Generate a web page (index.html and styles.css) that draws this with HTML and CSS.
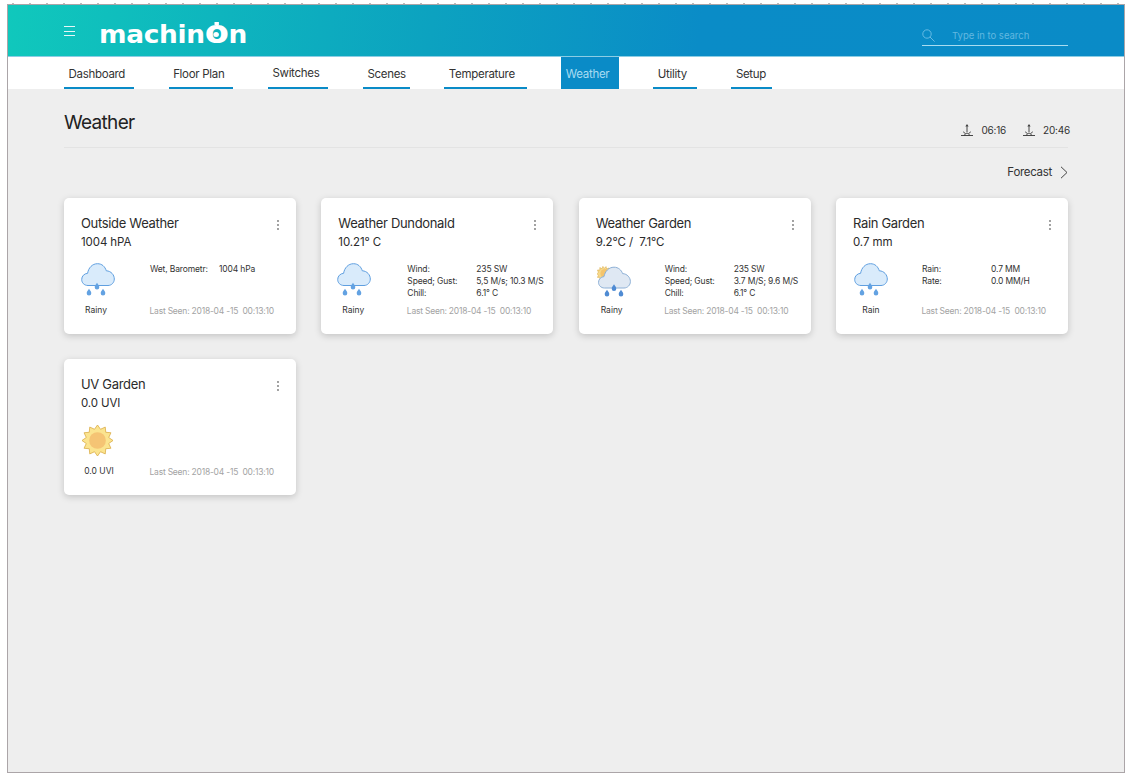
FILE: index.html
```html
<html>
<head>
<meta charset="utf-8">
<title>Machinon - Weather</title>
<link rel="stylesheet" href="styles.css">
</head>
<body>
<svg class="defs" width="0" height="0">
	<symbol id="cloud" viewBox="0 0 34 34">
		<path d="M7 22.5C3 22.5 .7 19.6 .7 16.5C.7 13 3.3 10.6 6.6 10.3C7.5 4.8 11.3 .7 16.5 .7C21 .7 24 3.6 25.3 7.8C30.2 8 33.3 12 33.3 16C33.3 19.6 30.5 22.5 27 22.5Z" fill="#d9ebfb" stroke="#5f9fe0" stroke-width="1"/>
		<path d="M16 19.8c-1.1 1.7-2.3 2.9-2.3 4.5a2.3 2.3 0 0 0 4.6 0c0-1.6-1.2-2.8-2.3-4.5zM8 25.8c-1.1 1.7-2.3 2.9-2.3 4.5a2.3 2.3 0 0 0 4.6 0c0-1.6-1.2-2.8-2.3-4.5zM22 25.8c-1.1 1.7-2.3 2.9-2.3 4.5a2.3 2.3 0 0 0 4.6 0c0-1.6-1.2-2.8-2.3-4.5z" fill="#63a2e2"/>
	</symbol>
	<symbol id="cloud-sun" viewBox="0 0 34 34">
		<polygon points="14,7 11.7,7.4 11.9,5 9.6,6 9,3.6 7.4,5.4 5.9,3.4 5,5.7 2.8,4.6 2.9,7.1 .5,7 1.4,9.2 0,10.8 1.4,12.2 .5,14.4 2.9,14.3 2.8,16.6 7,16 14,10" fill="#f7d98a" stroke="#dcae4e" stroke-width=".6"/>
		<circle cx="8" cy="10.5" r="4.6" fill="#f4c46c"/>
		<path d="M7.5 25C4 25 1.5 22.3 1.5 19.4C1.5 16.2 4 13.8 7 13.6C8 8.6 11.5 4.2 17 4.2C21.3 4.2 24.4 7 25.6 10.6C30.2 10.8 33.4 14.6 33.4 18.6C33.4 22 30.6 25 27 25Z" fill="#dfe8f3" stroke="#8db0d6" stroke-width="1"/>
		<path d="M17 21.3c-1.1 1.7-2.3 2.9-2.3 4.5a2.3 2.3 0 0 0 4.6 0c0-1.6-1.2-2.8-2.3-4.5zM10 26.8c-1.1 1.7-2.3 2.9-2.3 4.5a2.3 2.3 0 0 0 4.6 0c0-1.6-1.2-2.8-2.3-4.5zM24 26.8c-1.1 1.7-2.3 2.9-2.3 4.5a2.3 2.3 0 0 0 4.6 0c0-1.6-1.2-2.8-2.3-4.5z" fill="#4f8bd3"/>
	</symbol>
	<symbol id="sun" viewBox="0 0 32 32">
		<polygon points="32,16 27.6,12.9 29.86,8 24.5,7.5 24,2.14 19.1,4.4 16,0 12.9,4.4 8,2.14 7.5,7.5 2.14,8 4.4,12.9 0,16 4.4,19.1 2.14,24 7.5,24.5 8,29.86 12.9,27.6 16,32 19.1,27.6 24,29.86 24.5,24.5 29.86,24 27.6,19.1" fill="#fbe48f" stroke="#d9ab45" stroke-width=".8"/>
		<circle cx="16" cy="16" r="8.6" fill="#f5c474"/>
	</symbol>
	<symbol id="dots" viewBox="0 0 4 10">
		<circle cx="2" cy="1" r=".9" fill="#777"/>
		<circle cx="2" cy="5" r=".9" fill="#777"/>
		<circle cx="2" cy="9" r=".9" fill="#777"/>
	</symbol>
	<symbol id="sunmark" viewBox="0 0 12 13">
		<path d="M0 12.5H12M6 3.4V9M2.2 8.8L4.4 10.6M9.8 8.8L7.6 10.6M3.6 12.3C3.8 11 4.8 10.2 6 10.2C7.2 10.2 8.2 11 8.4 12.3" fill="none" stroke="#333" stroke-width=".9"/>
		<path d="M6 1L7.6 3.6H4.4Z" fill="#333"/>
	</symbol>
</svg>
<div class="ticks"></div>
<div class="frame">
	<header class="topbar">
		<div class="brand">
			<div class="burger"><span></span><span></span><span></span></div>
			<div class="logo">machin<span class="logo-o">o</span>n</div>
		</div>
		<div class="search">
			<svg class="search-icon" viewBox="0 0 13 13" width="13" height="13"><circle cx="5" cy="5" r="4.2" fill="none" stroke="#6fc0e6" stroke-width=".9"/><path d="M8 8L12.6 12.6" stroke="#6fc0e6" stroke-width=".9"/></svg>
			<span class="search-text">Type in to search</span>
		</div>
	</header>
	<nav class="tabs">
		<a class="tab">Dashboard</a>
		<a class="tab">Floor Plan</a>
		<a class="tab tab-high">Switches</a>
		<a class="tab tab-scenes">Scenes</a>
		<a class="tab tab-temp">Temperature</a>
		<a class="tab active">Weather</a>
		<a class="tab tab-utility">Utility</a>
		<a class="tab tab-setup">Setup</a>
	</nav>
	<main class="content">
		<div class="page-head">
			<h1>Weather</h1>
			<div class="sun-times">
				<svg class="sunmark"><use href="#sunmark"/></svg><span>06:16</span>
				<svg class="sunmark second"><use href="#sunmark"/></svg><span>20:46</span>
			</div>
		</div>
		<div class="forecast">
			<span>Forecast</span>
			<svg viewBox="0 0 8 13" width="8" height="13"><path d="M1 .8L7 6.5L1 12.2" fill="none" stroke="#444" stroke-width="1"/></svg>
		</div>
		<div class="cards">
			<section class="card">
				<svg class="card-menu"><use href="#dots"/></svg>
				<h2>Outside Weather</h2>
				<div class="value">1004 hPA</div>
				<div class="card-body">
					<svg class="weather-icon"><use href="#cloud"/></svg>
					<dl class="details">
						<dt>Wet, Barometr:</dt><dd>1004 hPa</dd>
					</dl>
				</div>
				<div class="card-foot">
					<span class="state">Rainy</span>
					<span class="seen">Last Seen: 2018-04 -15&nbsp;&nbsp;00:13:10</span>
				</div>
			</section>
			<section class="card">
				<svg class="card-menu"><use href="#dots"/></svg>
				<h2>Weather Dundonald</h2>
				<div class="value">10.21° C</div>
				<div class="card-body">
					<svg class="weather-icon icon-left"><use href="#cloud"/></svg>
					<dl class="details">
						<dt>Wind:</dt><dd>235 SW</dd>
						<dt>Speed; Gust:</dt><dd>5,5 M/s; 10.3 M/S</dd>
						<dt>Chill:</dt><dd>6.1° C</dd>
					</dl>
				</div>
				<div class="card-foot">
					<span class="state">Rainy</span>
					<span class="seen">Last Seen: 2018-04 -15&nbsp;&nbsp;00:13:10</span>
				</div>
			</section>
			<section class="card">
				<svg class="card-menu"><use href="#dots"/></svg>
				<h2>Weather Garden</h2>
				<div class="value">9.2°C /&nbsp;&nbsp;7.1°C</div>
				<div class="card-body">
					<svg class="weather-icon icon-right"><use href="#cloud-sun"/></svg>
					<dl class="details">
						<dt>Wind:</dt><dd>235 SW</dd>
						<dt>Speed; Gust:</dt><dd>3.7 M/S; 9.6 M/S</dd>
						<dt>Chill:</dt><dd>6.1° C</dd>
					</dl>
				</div>
				<div class="card-foot">
					<span class="state state-mid">Rainy</span>
					<span class="seen">Last Seen: 2018-04 -15&nbsp;&nbsp;00:13:10</span>
				</div>
			</section>
			<section class="card">
				<svg class="card-menu"><use href="#dots"/></svg>
				<h2>Rain Garden</h2>
				<div class="value">0.7 mm</div>
				<div class="card-body">
					<svg class="weather-icon icon-right"><use href="#cloud"/></svg>
					<dl class="details">
						<dt>Rain:</dt><dd>0.7 MM</dd>
						<dt>Rate:</dt><dd>0.0 MM/H</dd>
					</dl>
				</div>
				<div class="card-foot">
					<span class="state state-wide">Rain</span>
					<span class="seen">Last Seen: 2018-04 -15&nbsp;&nbsp;00:13:10</span>
				</div>
			</section>
			<section class="card">
				<svg class="card-menu"><use href="#dots"/></svg>
				<h2>UV Garden</h2>
				<div class="value">0.0 UVI</div>
				<div class="card-body">
					<svg class="weather-icon sun-icon"><use href="#sun"/></svg>
				</div>
				<div class="card-foot">
					<span class="state state-wide">0.0 UVI</span>
					<span class="seen">Last Seen: 2018-04 -15&nbsp;&nbsp;00:13:10</span>
				</div>
			</section>
		</div>
	</main>
</div>
</body>
</html>
```

FILE: styles.css
```css
html, body {
	margin: 0;
	padding: 0;
	background-color: #fff;
}

body {
	font-family: Inter, "Liberation Sans", sans-serif;
	color: #333;
	width: 1134px;
	height: 779px;
	overflow: hidden;
}

.defs {
	display: block;
	height: 0;
}

.ticks {
	height: 1px;
	margin: 3px 14px 0 12px;
	background: repeating-linear-gradient(90deg, #bbb 0, #bbb 2px, transparent 2px, transparent 17px);
}

.frame {
	margin-left: 7px;
	width: 1116px;
	height: 767px;
	border: 1px solid #aba5a8;
	display: flex;
	flex-direction: column;
	background-color: #eee;
}

/* header */
.topbar {
	height: 52px;
	flex: none;
	box-sizing: border-box;
	border-bottom: 1px solid #8ccde4;
	background: linear-gradient(97deg, #10c8bc 0%, #0ca2c0 38%, #0a8cc7 62%, #0a8bc7 100%);
	display: flex;
	justify-content: space-between;
	padding: 0 56px;
}

.brand {
	display: flex;
	align-items: flex-start;
}

.burger {
	width: 11px;
	margin-top: 21px;
	display: flex;
	flex-direction: column;
	gap: 3.6px;
}

.burger span {
	height: 1px;
	background-color: #e6f7f7;
}

.logo {
	margin: 10px 0 0 24px;
	height: 34px;
	font-family: "DejaVu Sans", sans-serif;
	font-weight: bold;
	font-size: 24px;
	line-height: 34px;
	letter-spacing: -.3px;
	color: #fff;
	white-space: nowrap;
	transform: scaleX(1.1);
	transform-origin: left center;
}

.logo-o {
	position: relative;
	display: inline-block;
	height: 34px;
	font-size: 32px;
}

.logo-o::before {
	content: "";
	position: absolute;
	left: 50%;
	top: 7px;
	width: 4px;
	height: 3px;
	margin-left: -2px;
	background-color: #fff;
}

.logo-o::after {
	content: "";
	position: absolute;
	left: 50%;
	top: 17px;
	width: 5px;
	height: 5px;
	margin-left: -2.5px;
	border-radius: 50%;
	background-color: #fff;
}

.search {
	width: 146px;
	height: 41px;
	box-sizing: border-box;
	border-bottom: 1px solid #a9dcf0;
	display: flex;
	align-items: flex-end;
	padding-bottom: 3px;
}

.search-icon {
	flex: none;
}

.search-text {
	margin-left: 17px;
	font-size: 9.5px;
	line-height: 13px;
	color: #62b8e0;
}

/* nav */
.tabs {
	height: 32px;
	flex: none;
	background-color: #fff;
	display: flex;
	gap: 34.5px;
	padding: 0 56px;
}

.tab {
	padding: 0 9px 0 4.5px;
	font-size: 11.5px;
	letter-spacing: -.3px;
	line-height: 34px;
	color: #333;
	border-bottom: 2px solid #0a8bc7;
	height: 30px;
}

.tab-high {
	line-height: 32px;
}

.tab-scenes {
	padding-right: 4px;
}

.tab-temp {
	padding-right: 12px;
}

.tab-utility {
	padding-right: 10px;
}

.tab-setup {
	padding-right: 6px;
}

.tab.active {
	background-color: #0a8bc7;
	color: #a8dcf2;
	padding-right: 9.5px;
}

/* content */
.content {
	flex: 1;
	padding: 0 56px;
}

.page-head {
	height: 59px;
	box-sizing: border-box;
	border-bottom: 1px solid #e3e3e3;
	display: flex;
	justify-content: space-between;
}

h1 {
	margin: 21px 0 0;
	font-size: 19px;
	letter-spacing: -.7px;
	line-height: 26px;
	font-weight: 400;
	color: #222;
}

.sun-times {
	margin: 33px -2px 0 0;
	display: flex;
	align-items: flex-start;
	font-size: 10px;
	letter-spacing: -.2px;
	line-height: 16px;
	color: #333;
}

.sunmark {
	width: 12px;
	height: 13px;
	margin-right: 8px;
	margin-top: 1px;
}

.sunmark.second {
	margin-left: 17px;
}

.forecast {
	margin-top: 16px;
	height: 16px;
	display: flex;
	justify-content: flex-end;
	align-items: center;
	gap: 8px;
	font-size: 11.5px;
	letter-spacing: -.3px;
	color: #333;
}

.cards {
	margin-top: 18px;
	display: grid;
	grid-template-columns: repeat(4, 232px);
	column-gap: 25.33px;
	row-gap: 25px;
}

.card {
	position: relative;
	height: 136px;
	box-sizing: border-box;
	padding: 16px 10px 0 17px;
	background-color: #fff;
	border-radius: 5px;
	box-shadow: 0 2px 7px rgba(0, 0, 0, .18);
}

.card-menu {
	position: absolute;
	right: 16px;
	top: 22px;
	width: 4px;
	height: 10px;
}

h2 {
	margin: 0;
	font-size: 13px;
	letter-spacing: -.33px;
	line-height: 18px;
	font-weight: 400;
	color: #2b2b2b;
}

.value {
	margin-top: 2px;
	font-size: 11.5px;
	letter-spacing: -.1px;
	line-height: 16px;
	color: #2b2b2b;
}

.card-body {
	margin-top: 13px;
	height: 40px;
	display: grid;
	grid-template-columns: 69px auto;
	align-items: start;
}

.weather-icon {
	width: 34px;
	height: 34px;
}

.icon-left {
	margin-left: -1px;
}

.icon-right {
	margin-left: 1px;
}

.sun-icon {
	width: 31px;
	height: 31px;
	margin: 1px 0 0 1px;
}

.details {
	margin: 0;
	display: grid;
	grid-template-columns: 69px auto;
	font-size: 8.5px;
	letter-spacing: -.15px;
	line-height: 12px;
	color: #333;
}

dt, dd {
	margin: 0;
	white-space: nowrap;
}

.card-foot {
	display: grid;
	grid-template-columns: 68.5px auto;
	margin-top: 1px;
	font-size: 8.5px;
	line-height: 12px;
}

.state {
	width: 30px;
	text-align: center;
	white-space: nowrap;
	color: #333;
}

.state-mid {
	width: 32px;
}

.state-wide {
	width: 36px;
}

.seen {
	margin-top: 1px;
	letter-spacing: -.22px;
	color: #a3a3a3;
	white-space: nowrap;
}
```
